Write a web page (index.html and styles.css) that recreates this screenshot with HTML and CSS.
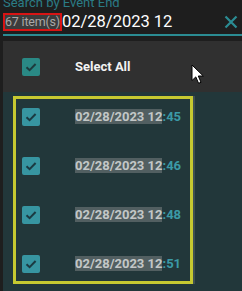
FILE: index.html
```html
<!DOCTYPE html>
<html>
<head>
<meta charset="utf-8">
<link rel="stylesheet" href="styles.css">
</head>
<body>
<div class="search">
  <div class="label">Search by Event End</div>
  <div class="input-row">
    <span class="count">67 item(s)</span>
    <span class="value">02/28/2023 12</span>
    <svg class="close" width="14" height="14" viewBox="0 0 14 14"><path d="M1.5 1.5 L12.5 12.5 M12.5 1.5 L1.5 12.5" stroke="#2b8c93" stroke-width="2.2" fill="none"/></svg>
  </div>
  <div class="underline"></div>
</div>
<div class="panel">
  <div class="row select-all">
    <span class="cb cb-all"><svg width="18" height="18" viewBox="0 0 18 18"><path d="M4.5 9.2 L7.6 12.2 L13.6 6" stroke="#1d3b3d" stroke-width="2" fill="none"/></svg></span>
    <span class="all-text">Select All</span>
  </div>
  <div class="list">
    <div class="row item">
      <span class="cb"><svg width="18" height="18" viewBox="0 0 18 18"><path d="M4.5 9.2 L7.6 12.2 L13.6 6" stroke="#1b3a42" stroke-width="2" fill="none"/></svg></span>
      <span class="item-text"><span class="hl">02/28/2023 12</span>:45</span>
    </div>
    <div class="row item">
      <span class="cb"><svg width="18" height="18" viewBox="0 0 18 18"><path d="M4.5 9.2 L7.6 12.2 L13.6 6" stroke="#1b3a42" stroke-width="2" fill="none"/></svg></span>
      <span class="item-text"><span class="hl">02/28/2023 12</span>:46</span>
    </div>
    <div class="row item">
      <span class="cb"><svg width="18" height="18" viewBox="0 0 18 18"><path d="M4.5 9.2 L7.6 12.2 L13.6 6" stroke="#1b3a42" stroke-width="2" fill="none"/></svg></span>
      <span class="item-text"><span class="hl">02/28/2023 12</span>:48</span>
    </div>
    <div class="row item">
      <span class="cb"><svg width="18" height="18" viewBox="0 0 18 18"><path d="M4.5 9.2 L7.6 12.2 L13.6 6" stroke="#1b3a42" stroke-width="2" fill="none"/></svg></span>
      <span class="item-text"><span class="hl">02/28/2023 12</span>:51</span>
    </div>
  </div>
</div>
<div class="highlight-box"></div>
<svg class="cursor" width="14" height="21" viewBox="0 0 14 21"><path d="M1 1 L1 16.5 L4.8 12.9 L7.6 19.3 L10 18.3 L7.3 12 L12.3 12 Z" fill="#ffffff" stroke="#000000" stroke-width="1"/></svg>
</body>
</html>
```
FILE: styles.css
```css
html, body {
  margin: 0;
  padding: 0;
}
body {
  width: 242px;
  height: 291px;
  overflow: hidden;
  background: #1e1e1e;
  font-family: Roboto, "Liberation Sans", sans-serif;
  position: relative;
}
.search {
  padding-left: 3px;
}
.label {
  font-size: 13px;
  line-height: 14px;
  margin-top: -4px;
  height: 13px;
  color: #2b7c86;
  white-space: nowrap;
}
.input-row {
  display: flex;
  align-items: center;
  height: 25px;
}
.count {
  box-sizing: border-box;
  height: 18px;
  border: 2px solid #d81414;
  background: #3c3c3c;
  color: #a8a8a8;
  font-size: 12.5px;
  line-height: 14px;
  letter-spacing: -0.2px;
  padding: 0;
  white-space: nowrap;
}
.value {
  color: #ffffff;
  font-size: 16.5px;
  line-height: 20px;
  white-space: nowrap;
}
.close {
  margin-left: auto;
  margin-right: 4px;
}
.underline {
  height: 2px;
  background: #2b8c93;
}
.panel {
  margin-top: 5px;
  margin-left: 3px;
}
.row {
  display: flex;
  align-items: center;
  padding-left: 19px;
}
.select-all {
  height: 51px;
  background: #303030;
}
.list {
  background: #22373a;
  height: 210px;
}
.item {
  height: 49px;
}
.cb {
  width: 18px;
  height: 18px;
  border-radius: 2px;
  background: #3795a1;
  display: flex;
}
.cb-all {
  background: #2a8985;
}
.all-text {
  margin-left: 35px;
  color: #f2f2f2;
  font-weight: bold;
  font-size: 13px;
}
.item-text {
  margin-left: 35px;
  color: #3b9aa6;
  font-weight: bold;
  font-size: 13px;
  line-height: 15px;
}
.hl {
  background: #525f61;
  color: #c3c7c7;
}
.highlight-box {
  position: absolute;
  left: 13px;
  top: 96px;
  width: 180px;
  height: 188px;
  box-sizing: border-box;
  border: 3px solid #c6c931;
  box-shadow: 2px 0 0 rgba(120,130,130,0.35);
}
.cursor {
  position: absolute;
  left: 191px;
  top: 64px;
}
```
